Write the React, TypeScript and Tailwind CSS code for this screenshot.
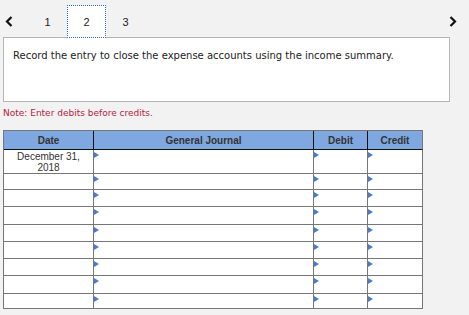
import React from 'react';

const ROWS = [
  { h: 'h-[24px]', date: ['December 31,', '2018'] },
  { h: 'h-[16px]' },
  { h: 'h-[17px]' },
  { h: 'h-[18px]' },
  { h: 'h-[17px]' },
  { h: 'h-[17px]' },
  { h: 'h-[17px]' },
  { h: 'h-[18px]' },
  { h: 'h-[15px]' },
];

function Arrow() {
  return (
    <svg width="5" height="6" viewBox="0 0 5 6" className="absolute left-0 top-[2px]">
      <path d="M0 0L5 3L0 6Z" fill="#4a7cc9" />
    </svg>
  );
}

function Chevron({ dir }: { dir: 'left' | 'right' }) {
  return (
    <svg width="8" height="11" viewBox="0 0 8 11">
      <path
        d={dir === 'left' ? 'M6.5 1L2 5.5L6.5 10' : 'M1.5 1L6 5.5L1.5 10'}
        fill="none"
        stroke="#111"
        strokeWidth="2.2"
      />
    </svg>
  );
}

export default function App() {
  return (
    <div className="h-[315px] w-[469px] overflow-hidden bg-[#f2f2f2] font-['Liberation_Sans',Arial,sans-serif]">
      {/* question tabs */}
      <div className="flex h-[38px] items-start pt-[5px]">
        <div className="flex h-[33px] w-[28px] items-center pl-[5px]">
          <Chevron dir="left" />
        </div>
        <div className="flex h-[33px] w-[39px] items-center justify-center pt-[2px] text-[11px] text-[#222]">1</div>
        <div className="relative z-10 flex h-[33px] w-[39px] items-center justify-center border border-dotted border-[#2f6fd0] bg-white pt-[2px] text-[11px] text-[#222]">
          2
        </div>
        <div className="flex h-[33px] w-[39px] items-center justify-center pt-[2px] text-[11px] text-[#222]">3</div>
        <div className="ml-auto flex h-[33px] items-center pr-[12px]">
          <Chevron dir="right" />
        </div>
      </div>

      <div className="-mt-[1px] ml-[3px] h-[65px] w-[447px] border border-[#b5b5b5] bg-white px-[9px] pt-[11px] font-['DejaVu_Sans',Verdana,sans-serif] text-[10px] leading-[14px] text-[#222]">
        Record the entry to close the expense accounts using the income summary.
      </div>

      <p className="ml-[3px] mt-[5px] font-['DejaVu_Sans',Verdana,sans-serif] text-[9px] leading-[12px] text-[#b3233d]">
        Note: Enter debits before credits.
      </p>

      <div className="ml-[3px] mt-[11px] w-[420px] border-l border-t border-[#767676] bg-white text-[#333]">
        <div className="flex h-[19px] bg-[#7fa8e0] text-[10px] font-bold">
          <div className="flex w-[90px] items-center justify-center border-b border-r border-b-[#111] border-r-[#111]">Date</div>
          <div className="flex w-[220px] items-center justify-center border-b border-r border-b-[#111] border-r-[#111]">General Journal</div>
          <div className="flex w-[54px] items-center justify-center border-b border-r border-b-[#111] border-r-[#111]">Debit</div>
          <div className="flex w-[55px] items-center justify-center border-b border-r border-b-[#111] border-r-[#767676]">Credit</div>
        </div>
        {ROWS.map((r, i) => (
          <div key={i} className={`flex ${r.h}`}>
            <div className="w-[90px] border-b border-r border-[#767676] pt-[1px] text-center text-[10px] leading-[11px]">
              {r.date && (
                <>
                  <div>{r.date[0]}</div>
                  <div>{r.date[1]}</div>
                </>
              )}
            </div>
            <div className="relative w-[220px] border-b border-r border-[#767676]">
              <Arrow />
            </div>
            <div className="relative w-[54px] border-b border-r border-[#767676]">
              <Arrow />
            </div>
            <div className="relative w-[55px] border-b border-r border-[#767676]">
              <Arrow />
            </div>
          </div>
        ))}
      </div>
    </div>
  );
}
